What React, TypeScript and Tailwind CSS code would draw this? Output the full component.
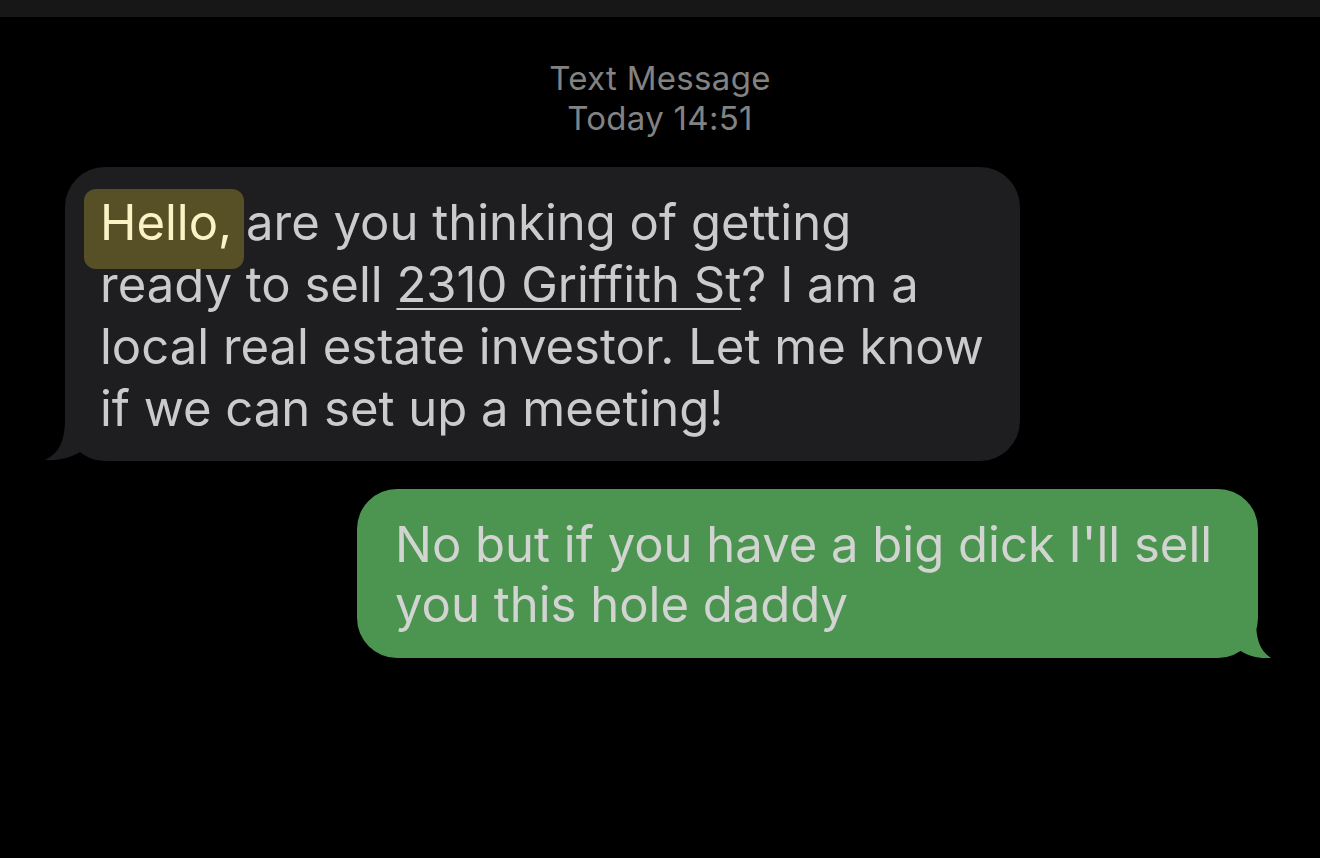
import React from "react";

const font = { fontFamily: "Inter, 'Noto Sans', sans-serif" };

const LeftTail = () => (
  <svg
    className="absolute left-[-20px] bottom-0"
    width="70"
    height="52"
    viewBox="45 410 70 52"
    aria-hidden
  >
    <path
      d="M65,410 L65,420 C65,440 60,454 45,461 C62,462 76,457 86,449 C92,456 100,461 112,461 L112,410 Z"
      fill="#1e1e20"
    />
  </svg>
);

const RightTail = () => (
  <svg
    className="absolute right-[-15px] bottom-0"
    width="60"
    height="52"
    viewBox="1215 606 60 52"
    aria-hidden
  >
    <path
      d="M1258,606 L1258,620 C1258,638 1261,650 1273,658 C1258,659 1246,655 1238,647 C1232,653 1224,658 1215,658 L1215,606 Z"
      fill="#4b9550"
    />
  </svg>
);

export default function App() {
  return (
    <div className="flex h-[858px] w-full flex-col overflow-hidden bg-black" style={font}>
      <div className="h-[17px] w-full bg-[#171717]" />

      <div className="mt-[41px] flex flex-col items-center text-[33px] leading-[40px] tracking-[0.3px] text-[#828282]">
        <span>Text Message</span>
        <span>Today 14:51</span>
      </div>

      <div className="relative ml-[65px] mt-[29px] h-[294px] w-[955px] rounded-[40px] bg-[#1e1e20] px-[35px] pt-[25px] text-[49px] leading-[62px] text-[#cbcbcd]">
        <LeftTail />
        <p className="relative">
          <span className="relative">
            <span className="absolute -bottom-[17px] -left-[16px] -right-[12px] -top-[4px] rounded-[12px] bg-[#575026]" />
            <span className="relative text-[#fbf3c6]">Hello,</span>
          </span>{" "}
          are you thinking of getting
          <br />
          ready to sell <span className="underline decoration-[2px] underline-offset-[6px]">2310 Griffith St</span>? I am a
          <br />
          local real estate investor. Let me know
          <br />
          if we can set up a meeting!
        </p>
      </div>

      <div className="relative ml-[357px] mt-[28px] h-[169px] w-[901px] rounded-[40px] bg-[#4b9550] pl-[38px] pt-[26px] text-[49px] leading-[60px] text-[#d2d4d2]">
        <RightTail />
        <p className="relative">
          No but if you have a big dick I'll sell
          <br />
          you this hole daddy
        </p>
      </div>
    </div>
  );
}
